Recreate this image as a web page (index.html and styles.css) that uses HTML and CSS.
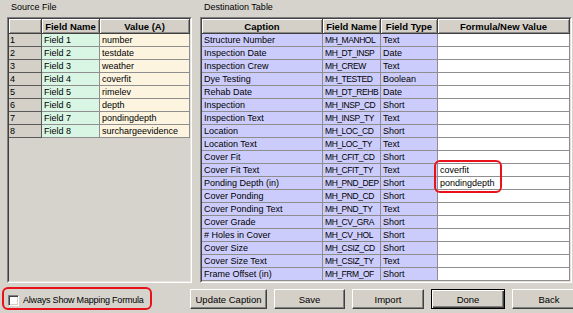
FILE: index.html
```html
<!DOCTYPE html>
<html lang="en">
<head>
    <meta charset="UTF-8">
    <title>Field Mapping</title>
    <link rel="stylesheet" href="styles.css">
</head>
<body>
    <div class="panes">
        <section class="pane source">
            <div class="pane-title">Source File</div>
            <div class="grid-box">
                <div class="grid-inner">
                    <table class="grid">
                        <colgroup>
                            <col class="c-num">
                            <col class="c-sname">
                            <col class="c-value">
                        </colgroup>
                        <thead>
                            <tr><th></th><th>Field Name</th><th>Value (A)</th></tr>
                        </thead>
                        <tbody>
                            <tr><td class="num">1</td><td class="mint">Field 1</td><td class="cream">number</td></tr>
                            <tr><td class="num">2</td><td class="mint">Field 2</td><td class="cream">testdate</td></tr>
                            <tr><td class="num">3</td><td class="mint">Field 3</td><td class="cream">weather</td></tr>
                            <tr><td class="num">4</td><td class="mint">Field 4</td><td class="cream">coverfit</td></tr>
                            <tr><td class="num">5</td><td class="mint">Field 5</td><td class="cream">rimelev</td></tr>
                            <tr><td class="num">6</td><td class="mint">Field 6</td><td class="cream">depth</td></tr>
                            <tr><td class="num">7</td><td class="mint">Field 7</td><td class="cream">pondingdepth</td></tr>
                            <tr><td class="num">8</td><td class="mint">Field 8</td><td class="cream">surchargeevidence</td></tr>
                        </tbody>
                    </table>
                </div>
            </div>
        </section>

        <section class="pane dest">
            <div class="pane-title">Destination Table</div>
            <div class="grid-box">
                <div class="grid-inner">
                    <table class="grid">
                        <colgroup>
                            <col class="c-caption">
                            <col class="c-dname">
                            <col class="c-type">
                            <col class="c-formula">
                        </colgroup>
                        <thead>
                            <tr><th>Caption</th><th>Field Name</th><th>Field Type</th><th>Formula/New Value</th></tr>
                        </thead>
                        <tbody>
                            <tr><td class="lav">Structure Number</td><td class="lav code">MH_MANHOL</td><td class="lav">Text</td><td></td></tr>
                            <tr><td class="lav">Inspection Date</td><td class="lav code">MH_DT_INSP</td><td class="lav">Date</td><td></td></tr>
                            <tr><td class="lav">Inspection Crew</td><td class="lav code">MH_CREW</td><td class="lav">Text</td><td></td></tr>
                            <tr><td class="lav">Dye Testing</td><td class="lav code">MH_TESTED</td><td class="lav">Boolean</td><td></td></tr>
                            <tr><td class="lav">Rehab Date</td><td class="lav code">MH_DT_REHB</td><td class="lav">Date</td><td></td></tr>
                            <tr><td class="lav">Inspection</td><td class="lav code">MH_INSP_CD</td><td class="lav">Short</td><td></td></tr>
                            <tr><td class="lav">Inspection Text</td><td class="lav code">MH_INSP_TY</td><td class="lav">Text</td><td></td></tr>
                            <tr><td class="lav">Location</td><td class="lav code">MH_LOC_CD</td><td class="lav">Short</td><td></td></tr>
                            <tr><td class="lav">Location Text</td><td class="lav code">MH_LOC_TY</td><td class="lav">Text</td><td></td></tr>
                            <tr><td class="lav">Cover Fit</td><td class="lav code">MH_CFIT_CD</td><td class="lav">Short</td><td></td></tr>
                            <tr><td class="lav">Cover Fit Text</td><td class="lav code">MH_CFIT_TY</td><td class="lav">Text</td><td>coverfit</td></tr>
                            <tr><td class="lav">Ponding Depth (in)</td><td class="lav code">MH_PND_DEP</td><td class="lav">Short</td><td>pondingdepth</td></tr>
                            <tr><td class="lav">Cover Ponding</td><td class="lav code">MH_PND_CD</td><td class="lav">Short</td><td></td></tr>
                            <tr><td class="lav">Cover Ponding Text</td><td class="lav code">MH_PND_TY</td><td class="lav">Text</td><td></td></tr>
                            <tr><td class="lav">Cover Grade</td><td class="lav code">MH_CV_GRA</td><td class="lav">Short</td><td></td></tr>
                            <tr><td class="lav"># Holes in Cover</td><td class="lav code">MH_CV_HOL</td><td class="lav">Short</td><td></td></tr>
                            <tr><td class="lav">Cover Size</td><td class="lav code">MH_CSIZ_CD</td><td class="lav">Short</td><td></td></tr>
                            <tr><td class="lav">Cover Size Text</td><td class="lav code">MH_CSIZ_TY</td><td class="lav">Text</td><td></td></tr>
                            <tr><td class="lav">Frame Offset (in)</td><td class="lav code">MH_FRM_OF</td><td class="lav">Short</td><td></td></tr>
                        </tbody>
                    </table>
                </div>
                <!-- red highlight drawn over the two mapped cells -->
                <div class="mark"></div>
            </div>
        </section>
    </div>

    <div class="footer">
        <label class="always">
            <span class="check"></span>
            <span>Always Show Mapping Formula</span>
        </label>
        <div class="buttons">
            <button class="btn w-update">Update Caption</button>
            <button class="btn w-save">Save</button>
            <button class="btn w-import">Import</button>
            <button class="btn w-done done">Done</button>
            <button class="btn w-back">Back</button>
        </div>
    </div>
</body>
</html>
```

FILE: styles.css
```css
*{
    margin: 0;
    padding: 0;
    box-sizing: border-box;
}
body{
    width: 573px;
    height: 313px;
    overflow: hidden;
    background: #d6d3cc;
    color: #000;
    font: 9px "Liberation Sans", Arial, sans-serif;
}

/* two panes */
.panes{
    display: flex;
    gap: 8px;
    padding-left: 7px;
}
.source{
    flex: none;
    width: 185px;
}
.dest{
    flex: none;
    width: 372px;
}
.pane-title{
    height: 17px;
    padding: 2px 0 0 4px;
    line-height: 10px;
}

/* sunken grid frame */
.grid-box{
    position: relative;
    height: 266px;
    border: 1px solid;
    border-color: #808080 #fff #fff #808080;
}
.grid-inner{
    height: 100%;
    border: 1px solid;
    border-color: #404040 #e6e3dc #e6e3dc #404040;
    overflow: hidden;
}

.grid{
    width: 100%;
    table-layout: fixed;
    border-collapse: separate;
    border-spacing: 0;
}
.c-num{ width: 33px; }
.c-sname{ width: 58px; }
.c-value{ width: 90px; }
.c-caption{ width: 121px; }
.c-dname{ width: 58px; }
.c-type{ width: 57px; }
.c-formula{ width: 132px; }

.grid thead tr{
    height: 15px;
}
.grid th{
    padding: 0;
    background: #d4d0c8;
    font-size: 9.5px;
    font-weight: bold;
    line-height: 13px;
    text-align: center;
    white-space: nowrap;
    border-right: 1px solid #404040;
    border-bottom: 1px solid #404040;
    box-shadow: inset 1px 1px #fff, inset -1px -1px #8c8a86;
}
.grid tbody tr{
    height: 13px;
}
.grid td{
    padding: 0 2px;
    line-height: 12px;
    white-space: nowrap;
    overflow: hidden;
    background: #fff;
    border-right: 1px solid #8e8e8e;
    border-bottom: 1px solid #8e8e8e;
}
.grid td.num{
    padding-left: 1px;
    background: #d4d0c8;
    border-color: #5a5a5a;
}
.grid td.mint{
    background: #d9f5e4;
}
.grid td.cream{
    background: #fcf4df;
}
.grid td.lav{
    background: #ccccfc;
}
.grid td.code{
    font-size: 8.5px;
    letter-spacing: -0.45px;
    padding-left: 2px;
}

.mark{
    position: absolute;
    left: 233px;
    top: 142px;
    width: 68px;
    height: 33px;
    border: 2px solid #e8121a;
    border-radius: 6px;
}

/* bottom bar */
.footer{
    display: flex;
    align-items: flex-start;
    height: 30px;
    padding-left: 2px;
}
.always{
    flex: none;
    display: flex;
    align-items: center;
    gap: 4px;
    width: 150px;
    height: 23px;
    margin-top: 4px;
    padding: 3px 0 0 4px;
    border: 2px solid #e8121a;
    border-radius: 6px;
    white-space: nowrap;
    letter-spacing: -0.2px;
}
.check{
    flex: none;
    width: 11px;
    height: 11px;
    background: #fff;
    border: 1px solid;
    border-color: #808080 #fff #fff #808080;
    box-shadow: inset 1px 1px #404040, inset -1px -1px #d4d0c8;
}
.buttons{
    display: flex;
    gap: 7px;
    margin: 6px 0 0 38px;
}
.btn{
    flex: none;
    height: 20px;
    font: 9.5px "Liberation Sans", Arial, sans-serif;
    color: #000;
    background: #d4d0c8;
    border: 1px solid;
    border-color: #fff #404040 #404040 #fff;
    box-shadow: inset -1px -1px #808080;
}
.btn.done{
    border: 1px solid #000;
    box-shadow: inset 1px 1px #fff, inset -1px -1px #404040, inset -2px -2px #808080;
}
.w-update{ width: 77px; }
.w-save{ width: 71px; }
.w-import{ width: 72px; }
.w-done{ width: 74px; }
.w-back{ width: 74px; }
```
